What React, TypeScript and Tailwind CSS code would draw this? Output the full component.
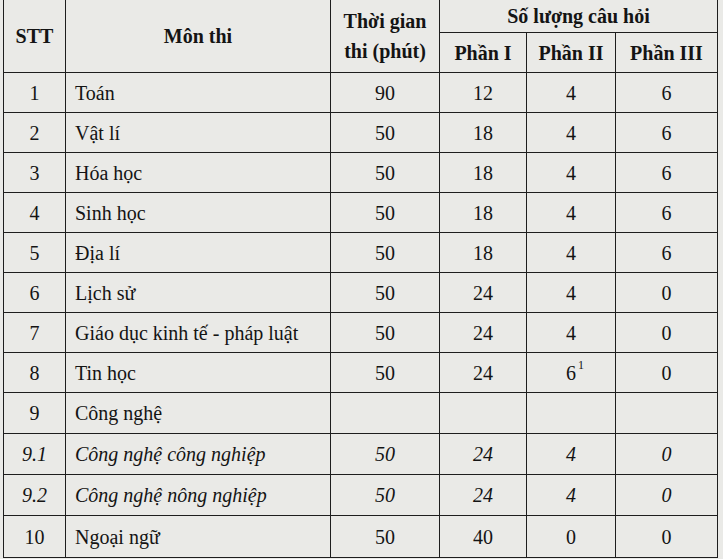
import React from "react";

type Row = {
  stt: string;
  name: string;
  time: string;
  p1: string;
  p2: React.ReactNode;
  p3: string;
  italic?: boolean;
  h: string;
};

const rows: Row[] = [
  { stt: "1", name: "Toán", time: "90", p1: "12", p2: "4", p3: "6", h: "h-[40px]" },
  { stt: "2", name: "Vật lí", time: "50", p1: "18", p2: "4", p3: "6", h: "h-[40px]" },
  { stt: "3", name: "Hóa học", time: "50", p1: "18", p2: "4", p3: "6", h: "h-[40px]" },
  { stt: "4", name: "Sinh học", time: "50", p1: "18", p2: "4", p3: "6", h: "h-[40px]" },
  { stt: "5", name: "Địa lí", time: "50", p1: "18", p2: "4", p3: "6", h: "h-[40px]" },
  { stt: "6", name: "Lịch sử", time: "50", p1: "24", p2: "4", p3: "0", h: "h-[40px]" },
  { stt: "7", name: "Giáo dục kinh tế - pháp luật", time: "50", p1: "24", p2: "4", p3: "0", h: "h-[40px]" },
  {
    stt: "8",
    name: "Tin học",
    time: "50",
    p1: "24",
    p2: (
      <span className="relative">
        6<span className="absolute left-full -top-[3px] ml-[2px] text-[12px] leading-none">1</span>
      </span>
    ),
    p3: "0",
    h: "h-[40px]",
  },
  { stt: "9", name: "Công nghệ", time: "", p1: "", p2: "", p3: "", h: "h-[41px]" },
  { stt: "9.1", name: "Công nghệ công nghiệp", time: "50", p1: "24", p2: "4", p3: "0", italic: true, h: "h-[41px]" },
  { stt: "9.2", name: "Công nghệ nông nghiệp", time: "50", p1: "24", p2: "4", p3: "0", italic: true, h: "h-[41px]" },
  { stt: "10", name: "Ngoại ngữ", time: "50", p1: "40", p2: "0", p3: "0", h: "h-[42px]" },
];

const cell = "border border-[#1e1e1e] p-0";

export default function App() {
  return (
    <div
      className="w-[723px] h-[559px] overflow-hidden bg-[#eaeae7] text-[#141414]"
      style={{ fontFamily: '"Liberation Serif", "Times New Roman", serif' }}
    >
      <table className="table-fixed border-collapse ml-[3px] -mt-px text-[20px]">
        <colgroup>
          <col className="w-[62px]" />
          <col className="w-[265px]" />
          <col className="w-[109px]" />
          <col className="w-[87px]" />
          <col className="w-[89px]" />
          <col className="w-[102px]" />
        </colgroup>
        <thead>
          <tr className="h-[33px]">
            <th rowSpan={2} className={`${cell} font-bold text-center`}>
              STT
            </th>
            <th rowSpan={2} className={`${cell} font-bold text-center`}>
              Môn thi
            </th>
            <th rowSpan={2} className={`${cell} font-bold text-center leading-[30px]`}>
              Thời gian
              <br />
              thi (phút)
            </th>
            <th colSpan={3} className={`${cell} font-bold text-center leading-none`}>
              Số lượng câu hỏi
            </th>
          </tr>
          <tr className="h-[40px]">
            <th className={`${cell} font-bold text-center`}>Phần I</th>
            <th className={`${cell} font-bold text-center`}>Phần II</th>
            <th className={`${cell} font-bold text-center`}>Phần III</th>
          </tr>
        </thead>
        <tbody>
          {rows.map((r) => (
            <tr key={r.stt} className={`${r.h} ${r.italic ? "italic" : ""}`}>
              <td className={`${cell} text-center`}>{r.stt}</td>
              <td className={`${cell} pl-[9px] whitespace-nowrap`}>{r.name}</td>
              <td className={`${cell} text-center`}>{r.time}</td>
              <td className={`${cell} text-center`}>{r.p1}</td>
              <td className={`${cell} text-center`}>{r.p2}</td>
              <td className={`${cell} text-center`}>{r.p3}</td>
            </tr>
          ))}
        </tbody>
      </table>
    </div>
  );
}
